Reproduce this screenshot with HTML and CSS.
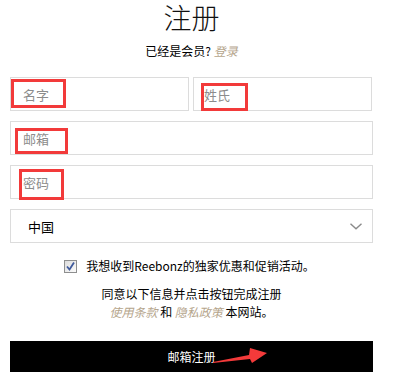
FILE: index.html
```html
<!DOCTYPE html>
<html lang="zh-CN">
<head>
<meta charset="utf-8">
<title>注册</title>
<link rel="stylesheet" href="styles.css">
</head>
<body>
<div class="page">
  <h1 class="title">注册</h1>
  <p class="sub">已经是会员? <a class="link" href="#">登录</a></p>

  <div class="row">
    <div class="field"><span class="ph ph-first">名字</span><span class="mark mark-first"></span></div>
    <div class="field"><span class="ph ph-last">姓氏</span><span class="mark mark-last"></span></div>
  </div>
  <div class="field full"><span class="ph">邮箱</span><span class="mark mark-email"></span></div>
  <div class="field full"><span class="ph">密码</span><span class="mark mark-pass"></span></div>
  <div class="field full select">
    <span class="country">中国</span>
    <svg class="chev" width="12" height="7" viewBox="0 0 12 7"><path d="M0.5 0.8 L6 5.8 L11.5 0.8" fill="none" stroke="#8a8a8a" stroke-width="1.4"/></svg>
  </div>

  <div class="opt">
    <span class="check"><svg width="11" height="11" viewBox="0 0 11 11"><path d="M2 5.5 L4.5 8.5 L9 1.5" fill="none" stroke="#3f5a9c" stroke-width="1.8"/></svg></span>
    <span>我想收到Reebonz的独家优惠和促销活动。</span>
  </div>

  <p class="terms">同意以下信息并点击按钮完成注册<br><a class="link" href="#">使用条款</a> 和 <a class="link" href="#">隐私政策</a> 本网站。</p>

  <div class="btn">
    <span class="btn-text">邮箱注册</span>
    <svg class="arrow" width="56" height="17" viewBox="0 0 56 17"><polygon points="0,14 36,7 37,0 54,5 39,15 37,11 0,15" fill="#f33a3a"/></svg>
  </div>
</div>
</body>
</html>
```
FILE: styles.css
```css
html, body {
  margin: 0;
  padding: 0;
  background: #fff;
}
body {
  font-family: "Noto Sans CJK SC", "Liberation Sans", sans-serif;
  font-size: 12px;
  color: #000;
}
.page {
  width: 363px;
  padding: 0 0 0 10px;
}
.title {
  margin: 0;
  height: 34px;
  line-height: 34px;
  font-size: 28px;
  font-weight: 300;
  color: #111;
  text-align: center;
}
.sub {
  margin: 8px 0 0;
  line-height: 18px;
  text-align: center;
}
.link {
  color: #b5a58c;
  font-style: italic;
  text-decoration: none;
}
.row {
  margin-top: 17px;
  display: grid;
  grid-template-columns: 179px 179px;
  column-gap: 4px;
}
.field {
  position: relative;
  box-sizing: border-box;
  height: 34px;
  border: 1px solid #dcdcdc;
  display: flex;
  align-items: center;
  padding-left: 12px;
}
.full {
  margin-top: 10px;
}
.ph {
  font-size: 13px;
  color: #8c8c8c;
}
.ph-last {
  margin-left: -2px;
}
.mark {
  position: absolute;
  box-sizing: border-box;
  border: 3px solid #f23a3a;
}
.mark-first { left: 0; top: 1px; width: 55px; height: 29px; }
.mark-last { left: 7px; top: 5px; width: 47px; height: 28px; }
.mark-email { left: 4px; top: 6px; width: 53px; height: 26px; }
.mark-pass { left: 8px; top: 3px; width: 45px; height: 31px; }
.select {
  justify-content: space-between;
  padding: 0 10px 0 17px;
}
.country {
  font-size: 13px;
  color: #000;
}
.chev {
  display: block;
}
.opt {
  margin-top: 14px;
  display: flex;
  align-items: center;
  justify-content: center;
  gap: 9px;
  line-height: 18px;
  padding-right: 4px;
}
.check {
  box-sizing: border-box;
  width: 13px;
  height: 13px;
  border: 1px solid #8e8f8f;
  background: linear-gradient(135deg, #dcdcdc, #fbfbfb);
  display: flex;
  align-items: center;
  justify-content: center;
}
.check svg { display: block; }
.terms {
  margin: 10px 0 0;
  line-height: 18px;
  text-align: center;
}
.btn {
  position: relative;
  margin-top: 20px;
  height: 31px;
  background: #000;
  color: #fff;
  display: flex;
  align-items: center;
  justify-content: center;
}
.btn-text {
  font-size: 12px;
}
.arrow {
  position: absolute;
  left: 203px;
  top: 7px;
}
```
